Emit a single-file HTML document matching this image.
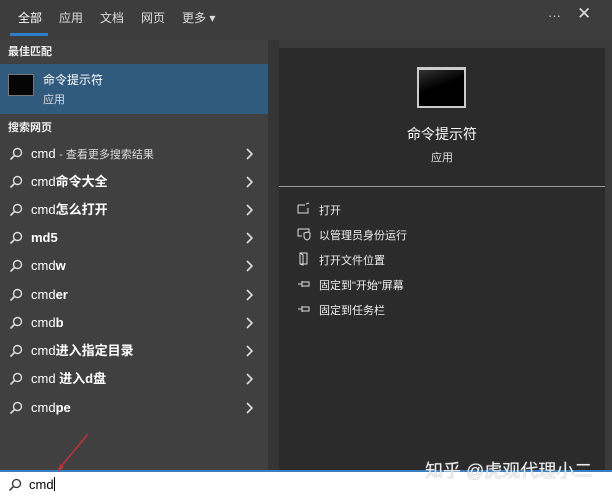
<!DOCTYPE html>
<html><head><meta charset="utf-8"><style>
*{margin:0;padding:0;box-sizing:border-box}
body{width:612px;height:500px;overflow:hidden;background:#3b3b3b;font-family:"Liberation Sans","Noto Sans CJK SC",sans-serif;color:#fff;position:relative;line-height:16px}
.top{position:absolute;left:0;top:0;width:612px;height:40px;background:#3d3d3d}
.tab{position:absolute;top:10px;font-size:12px;color:#ddd}
.ul{position:absolute;left:10px;top:33px;width:38px;height:3px;background:#2f7dc8}
.left{position:absolute;left:0;top:40px;width:268px;height:430px;background:#404040}
.strip{position:absolute;left:268px;top:40px;width:11px;height:430px;background:#353535}
.right{position:absolute;left:279px;top:48px;width:326px;height:422px;background:#2b2b2b}
.hdr{position:absolute;left:8px;font-size:11px;font-weight:bold;color:#eee}
.sel{position:absolute;left:0;top:64px;width:268px;height:50px;background:#315b7e}
.row{position:absolute;left:0;width:268px;height:28px;font-size:13px;color:#fff}
.row svg.s{position:absolute;left:9px;top:7px}
.row span{position:absolute;left:31px;top:6px;line-height:16px;white-space:nowrap}
.row b{font-weight:600}
.row svg.c{position:absolute;left:245px;top:8px}
.act{position:absolute;left:319px;font-size:11px;color:#eee}
.ai{position:absolute;left:297px}
.bar{position:absolute;left:0;top:470px;width:612px;height:30px;background:#fff;border-top:2px solid #3a7fc0}
</style></head><body>
<div class="top"></div>
<div class="tab" style="left:18px;color:#fff">全部</div>
<div class="tab" style="left:59px">应用</div>
<div class="tab" style="left:100px">文档</div>
<div class="tab" style="left:141px">网页</div>
<div class="tab" style="left:182px">更多 ▾</div>
<div class="ul"></div>
<div style="position:absolute;left:548px;top:8px;font-size:13px;color:#ccc">···</div>
<div style="position:absolute;left:577px;top:6px;font-size:17px;color:#ddd">✕</div>
<div class="left"></div>
<div class="strip"></div>
<div class="right"></div>
<div class="hdr" style="top:44px">最佳匹配</div>
<div class="sel"></div>
<div style="position:absolute;left:8px;top:74px;width:26px;height:22px;background:#050505;border:1px solid #777"></div>
<div style="position:absolute;left:43px;top:72px;font-size:12px">命令提示符</div>
<div style="position:absolute;left:43px;top:92px;font-size:11px;color:#ddd">应用</div>
<div class="hdr" style="top:120px">搜索网页</div>
<div class="row" style="top:140px"><svg class="s" width="14" height="14"><circle cx="8.5" cy="5.5" r="4" fill="none" stroke="#ddd" stroke-width="1.4"/><path d="M5.5 8.5L1.5 12.5" stroke="#ddd" stroke-width="1.6"/></svg><span>cmd <small style="font-size:11px;color:#ddd">- 查看更多搜索结果</small></span><svg class="c" width="8" height="12"><path d="M2 1L7 6L2 11" fill="none" stroke="#ddd" stroke-width="1.6"/></svg></div>
<div class="row" style="top:168px"><svg class="s" width="14" height="14"><circle cx="8.5" cy="5.5" r="4" fill="none" stroke="#ddd" stroke-width="1.4"/><path d="M5.5 8.5L1.5 12.5" stroke="#ddd" stroke-width="1.6"/></svg><span>cmd<b>命令大全</b></span><svg class="c" width="8" height="12"><path d="M2 1L7 6L2 11" fill="none" stroke="#ddd" stroke-width="1.6"/></svg></div>
<div class="row" style="top:196px"><svg class="s" width="14" height="14"><circle cx="8.5" cy="5.5" r="4" fill="none" stroke="#ddd" stroke-width="1.4"/><path d="M5.5 8.5L1.5 12.5" stroke="#ddd" stroke-width="1.6"/></svg><span>cmd<b>怎么打开</b></span><svg class="c" width="8" height="12"><path d="M2 1L7 6L2 11" fill="none" stroke="#ddd" stroke-width="1.6"/></svg></div>
<div class="row" style="top:224px"><svg class="s" width="14" height="14"><circle cx="8.5" cy="5.5" r="4" fill="none" stroke="#ddd" stroke-width="1.4"/><path d="M5.5 8.5L1.5 12.5" stroke="#ddd" stroke-width="1.6"/></svg><span><b>md5</b></span><svg class="c" width="8" height="12"><path d="M2 1L7 6L2 11" fill="none" stroke="#ddd" stroke-width="1.6"/></svg></div>
<div class="row" style="top:252px"><svg class="s" width="14" height="14"><circle cx="8.5" cy="5.5" r="4" fill="none" stroke="#ddd" stroke-width="1.4"/><path d="M5.5 8.5L1.5 12.5" stroke="#ddd" stroke-width="1.6"/></svg><span>cmd<b>w</b></span><svg class="c" width="8" height="12"><path d="M2 1L7 6L2 11" fill="none" stroke="#ddd" stroke-width="1.6"/></svg></div>
<div class="row" style="top:281px"><svg class="s" width="14" height="14"><circle cx="8.5" cy="5.5" r="4" fill="none" stroke="#ddd" stroke-width="1.4"/><path d="M5.5 8.5L1.5 12.5" stroke="#ddd" stroke-width="1.6"/></svg><span>cmd<b>er</b></span><svg class="c" width="8" height="12"><path d="M2 1L7 6L2 11" fill="none" stroke="#ddd" stroke-width="1.6"/></svg></div>
<div class="row" style="top:309px"><svg class="s" width="14" height="14"><circle cx="8.5" cy="5.5" r="4" fill="none" stroke="#ddd" stroke-width="1.4"/><path d="M5.5 8.5L1.5 12.5" stroke="#ddd" stroke-width="1.6"/></svg><span>cmd<b>b</b></span><svg class="c" width="8" height="12"><path d="M2 1L7 6L2 11" fill="none" stroke="#ddd" stroke-width="1.6"/></svg></div>
<div class="row" style="top:337px"><svg class="s" width="14" height="14"><circle cx="8.5" cy="5.5" r="4" fill="none" stroke="#ddd" stroke-width="1.4"/><path d="M5.5 8.5L1.5 12.5" stroke="#ddd" stroke-width="1.6"/></svg><span>cmd<b>进入指定目录</b></span><svg class="c" width="8" height="12"><path d="M2 1L7 6L2 11" fill="none" stroke="#ddd" stroke-width="1.6"/></svg></div>
<div class="row" style="top:365px"><svg class="s" width="14" height="14"><circle cx="8.5" cy="5.5" r="4" fill="none" stroke="#ddd" stroke-width="1.4"/><path d="M5.5 8.5L1.5 12.5" stroke="#ddd" stroke-width="1.6"/></svg><span>cmd <b>进入d盘</b></span><svg class="c" width="8" height="12"><path d="M2 1L7 6L2 11" fill="none" stroke="#ddd" stroke-width="1.6"/></svg></div>
<div class="row" style="top:394px"><svg class="s" width="14" height="14"><circle cx="8.5" cy="5.5" r="4" fill="none" stroke="#ddd" stroke-width="1.4"/><path d="M5.5 8.5L1.5 12.5" stroke="#ddd" stroke-width="1.6"/></svg><span>cmd<b>pe</b></span><svg class="c" width="8" height="12"><path d="M2 1L7 6L2 11" fill="none" stroke="#ddd" stroke-width="1.6"/></svg></div>
<div style="position:absolute;left:417px;top:67px;width:49px;height:41px;background:linear-gradient(160deg,#333 0%,#000 45%);border:2px solid #ccc;border-top-width:3px"></div>
<div style="position:absolute;left:279px;top:126px;width:326px;text-align:center;font-size:14px">命令提示符</div>
<div style="position:absolute;left:279px;top:150px;width:326px;text-align:center;font-size:11px;color:#ddd">应用</div>
<div style="position:absolute;left:279px;top:186px;width:326px;height:1px;background:#999"></div>
<svg class="ai" style="top:202px" width="14" height="14"><path d="M1 3V11H11V6M1 3H8M9 2L12 1" fill="none" stroke="#ddd" stroke-width="1"/></svg>
<div class="act" style="top:203px">打开</div>
<svg class="ai" style="top:227px" width="14" height="14"><path d="M1 2H12V5M1 2V9H5M7 6L11 5L13 6V9Q13 12 10 13Q7 12 7 9Z" fill="none" stroke="#ddd" stroke-width="1"/></svg>
<div class="act" style="top:228px">以管理员身份运行</div>
<svg class="ai" style="top:252px" width="14" height="14"><path d="M3 1H10V12H3ZM3 1L6 3V13L3 12" fill="none" stroke="#ddd" stroke-width="1"/></svg>
<div class="act" style="top:253px">打开文件位置</div>
<svg class="ai" style="top:277px" width="14" height="14"><path d="M1 7H5M5 4V10M5 5H12V9H5" fill="none" stroke="#ddd" stroke-width="1"/></svg>
<div class="act" style="top:278px">固定到"开始"屏幕</div>
<svg class="ai" style="top:302px" width="14" height="14"><path d="M1 7H5M5 4V10M5 5H12V9H5" fill="none" stroke="#ddd" stroke-width="1"/></svg>
<div class="act" style="top:303px">固定到任务栏</div>
<div class="bar"></div>
<svg style="position:absolute;left:8px;top:478px" width="14" height="14"><circle cx="8.5" cy="5.5" r="4" fill="none" stroke="#333" stroke-width="1.3"/><path d="M5.5 8.5L1.5 12.5" stroke="#333" stroke-width="1.5"/></svg>
<div style="position:absolute;left:29px;top:477px;font-size:13px;color:#000">cmd<span style="display:inline-block;width:1px;height:14px;background:#000;vertical-align:-2px"></span></div>
<div style="position:absolute;left:425px;top:460px;font-size:18px;line-height:22px;color:rgba(255,255,255,.85);text-shadow:0 0 1px #888">知乎 @虎观代理小二</div>
<svg style="position:absolute;left:0;top:0" width="612" height="500"><path d="M88 434L58 470" stroke="#c0303a" stroke-width="1.5"/><path d="M58 472L60 464L64 467Z" fill="#c0303a"/></svg>
</body></html>
